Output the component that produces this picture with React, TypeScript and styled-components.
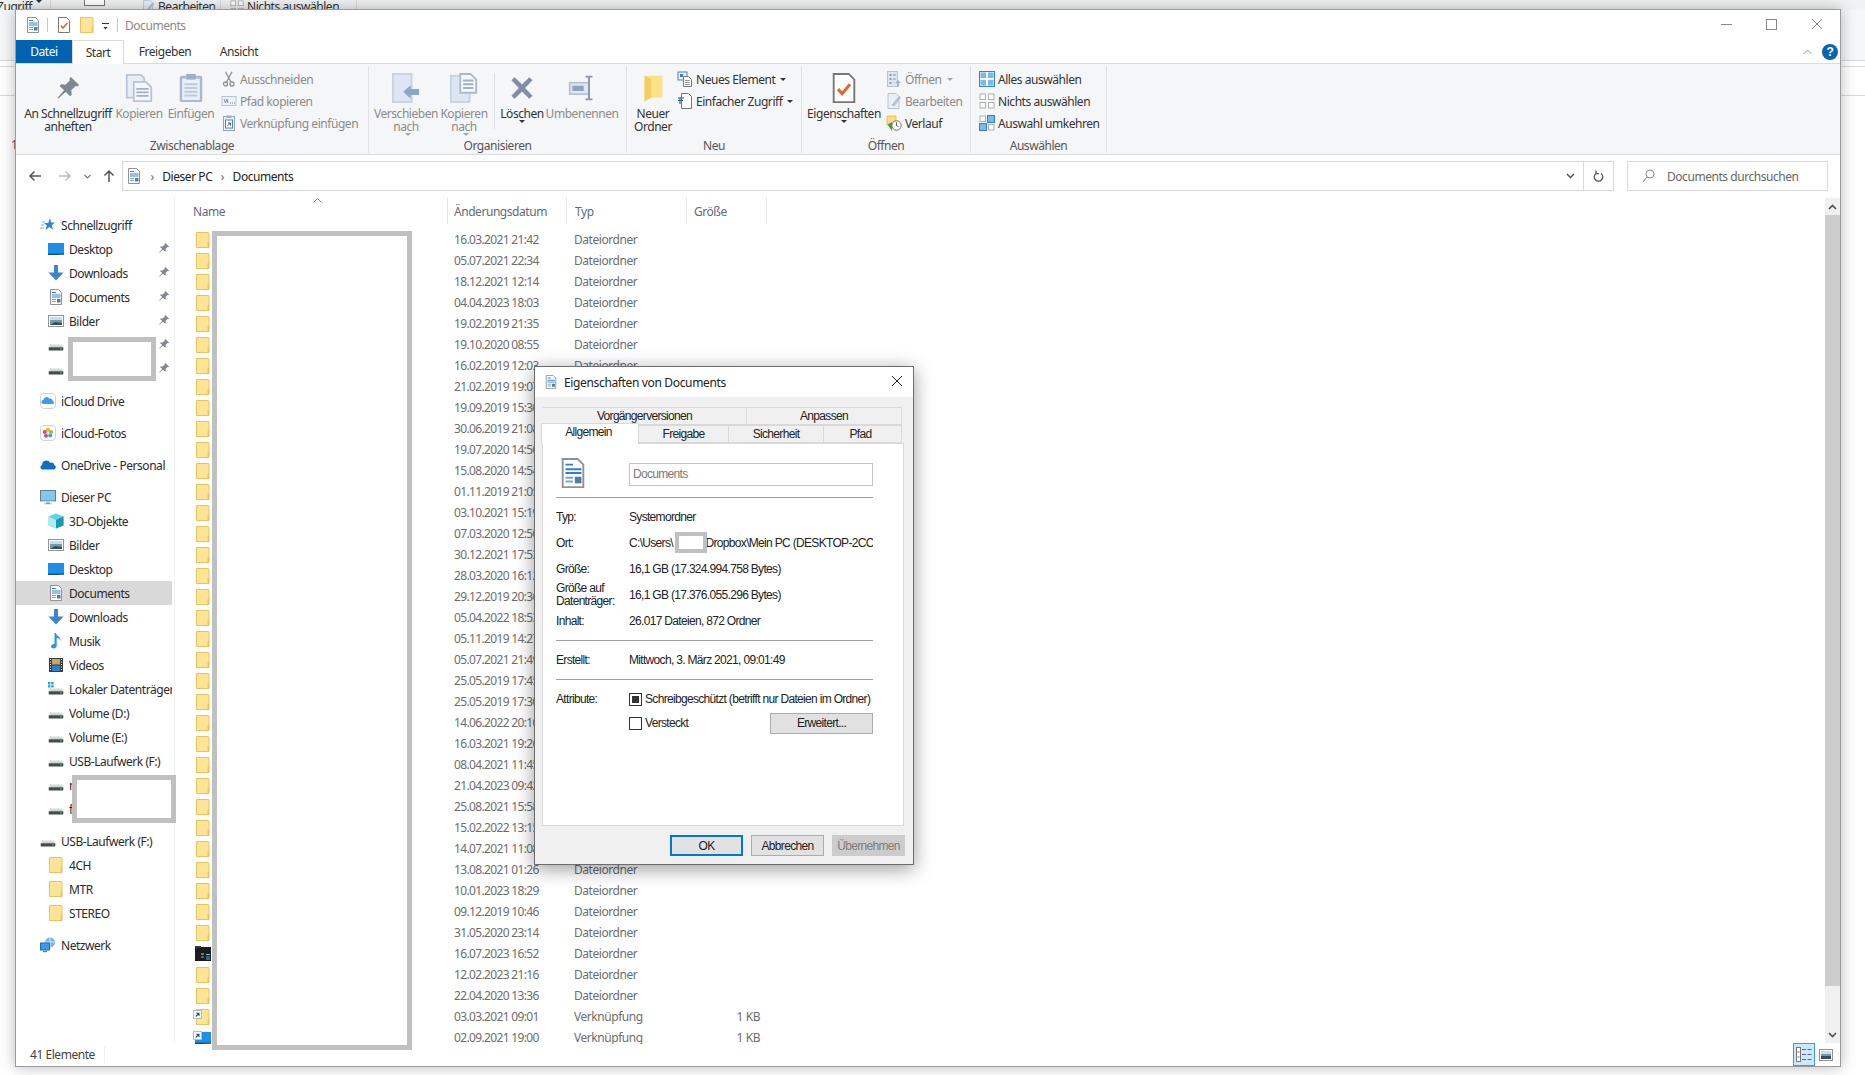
import React from 'react';
import styled, { createGlobalStyle } from 'styled-components';

const GlobalStyle = createGlobalStyle`
  html, body { margin: 0; padding: 0; background: #fff; overflow: hidden; }
  * { box-sizing: border-box; }
`;

const UI_FONT = `"Noto Sans", "Open Sans", sans-serif`;
const DLG_FONT = `"Liberation Sans", Arial, sans-serif`;

/* ---------- icons, all drawn on a 16x16 grid ---------- */
const shapes: Record<string, React.ReactNode> = {
  pin: <path d="M9.8 1.2l5 5-1.1.9-1-.4-2.7 2.7.3 2.7-1 1-2.7-2.7L2 14.4l-.4-.4 4-4.6-2.8-2.7 1-1 2.7.3L9.2 3.3l-.4-1z" fill="#7f8790" />,
  docs: (
    <g>
      <path d="M2.5.5h8l3 3v12h-11z" fill="#fff" stroke="#8d9299" />
      <path d="M4 3.5h4M4 6h8.5M4 8h8.5" stroke="#2f7fd0" />
      <path d="M4 10.5h4M4 12.5h4" stroke="#7aa5cc" />
      <rect x="9" y="10" width="3.5" height="3.5" fill="#4f7f9c" />
    </g>
  ),
  checkDoc: (
    <g>
      <path d="M2.5.5h8l3 3v12h-11z" fill="#fff" stroke="#777" />
      <path d="M4.8 8.6l2.2 2.4 4.2-5" fill="none" stroke="#e2672e" strokeWidth="1.6" />
    </g>
  ),
  folder: (
    <g>
      <path d="M1.5.5h12l.5.5v14.500h-12.500z" fill="#fee495" stroke="#eac25f" />
      <path d="M12.600 10h1.400v5.500h-1.400z" fill="#f0c050" />
    </g>
  ),
  folderLarge: (
    <g>
      <path d="M3.500 1.500h9.500v11.500H6.500L3.500 15z" fill="#fde08a" />
      <path d="M3.500 1.500l3.500 1.500v10L3.500 15z" fill="#f5cd5e" />
    </g>
  ),
  copy: (
    <g stroke="#b5c4d8" fill="#e7eef7">
      <path d="M1 .5h8l2 2v11H1z" />
      <path d="M5 4.5h7l3 3v8H5z" fill="#f4f7fb" />
      <path d="M6.5 8.5h7M6.5 10.5h7M6.5 12.5h7" fill="none" stroke="#9fb0c8" />
    </g>
  ),
  paste: (
    <g>
      <rect x="2" y="1.5" width="12" height="14" fill="#a8bad2" rx="1" />
      <rect x="3.3" y="3" width="9.4" height="11.4" fill="#e8eff8" />
      <rect x="5.5" y="0.5" width="5" height="3" fill="#9cb0ca" />
      <path d="M4.5 6h7M4.5 8h7M4.5 10h7M4.5 12h7" stroke="#bccbdd" />
    </g>
  ),
  scissors: (
    <g fill="none" stroke="#8b929b" strokeWidth="1.3">
      <circle cx="4.5" cy="13" r="2" />
      <circle cx="11" cy="13" r="2" />
      <path d="M5.5 11.3L11 .8M10 11.3L4.5.8" />
    </g>
  ),
  pathCopy: (
    <g>
      <rect x="1" y="3.5" width="14" height="9" fill="#eef2f8" stroke="#b6c3d6" />
      <path d="M3 6l1.5 4L6 6l1 4M9 10h1M11 10h1M13 10h1" stroke="#7c8ea8" fill="none" />
    </g>
  ),
  pasteLink: (
    <g>
      <rect x="2.5" y="1.5" width="11" height="14" fill="#e8eff8" stroke="#8fa6c4" />
      <rect x="5.5" y=".5" width="5" height="2.5" fill="#9cb0ca" />
      <rect x="4.5" y="5" width="7" height="8" fill="#fff" stroke="#5f7ea8" />
      <path d="M6.5 11l3-3M7 8h2.6v2.6" fill="none" stroke="#35598a" />
    </g>
  ),
  moveTo: (
    <g>
      <rect x="1" y=".5" width="10" height="15" fill="#dde6f2" stroke="#c5d3e4" />
      <path d="M6.5 10L10.5 6.5v2H15v3.2h-4.5v2z" fill="#8ba6cb" />
    </g>
  ),
  copyTo: (
    <g>
      <rect x="1" y="1.5" width="10" height="14" fill="#dde6f2" stroke="#c5d3e4" />
      <path d="M6 .5h5.5l3 3v7H6z" fill="#f7f9fc" stroke="#a9bad0" />
      <path d="M7.5 4h5.5M7.5 6h5.5M7.5 8h5.5" stroke="#9fb0c8" />
    </g>
  ),
  del: <path d="M2 3.5L3.8 1.8 8 6l4.2-4.2L14 3.5 9.8 8l4.2 4.4-1.8 1.8L8 10l-4.2 4.2L2 12.4 6.2 8z" fill="#7f8ea6" />,
  rename: (
    <g>
      <rect x="1" y="5" width="11" height="6.5" fill="#dfe7f2" stroke="#b4c2d6" />
      <rect x="2.5" y="6.7" width="6.5" height="3" fill="#8ea2bf" />
      <path d="M10 1.5h4M12 1.5v13M10 14.5h4" stroke="#8c97a8" strokeWidth="1.1" fill="none" />
    </g>
  ),
  newItem: (
    <g>
      <rect x="1" y="1" width="9" height="8" fill="#e8f0f8" stroke="#5d7ea3" />
      <rect x="3" y="3" width="3" height="3" fill="#3d7cb8" />
      <path d="M6.5 5.5h5l3 3v7h-8z" fill="#fff" stroke="#777" />
      <path d="M8 9.5h5M8 11.5h5M8 13.5h5" stroke="#999" />
    </g>
  ),
  easy: (
    <g>
      <path d="M4.5.5h7l3 3v12h-10z" fill="#fff" stroke="#777" />
      <path d="M1 5h6M1 7.5h5M3 5v6" stroke="#2a5f9e" strokeWidth="1.1" fill="none" />
    </g>
  ),
  openDoc: (
    <g>
      <rect x="1.5" y=".5" width="10" height="15" fill="#dfe6f0" stroke="#b4c2d6" />
      <path d="M3.5 3h2v2h-2zM3.5 7h2v2h-2zM3.5 11h2v2h-2z" fill="#8a9ab0" />
      <path d="M7 4h3M7 8h3" stroke="#8a9ab0" />
      <path d="M9 12l3-3 3 3h-2v3.5h-2V12z" fill="#9fb3cf" />
    </g>
  ),
  edit: (
    <g>
      <path d="M2 .5h8l3 3v12H2z" fill="#e9eff7" stroke="#b4c2d6" />
      <path d="M6 12l7-8.5 1.5 1.2L8 13z" fill="#b9c6d8" stroke="#96a6bc" strokeWidth=".5" />
    </g>
  ),
  history: (
    <g>
      <path d="M1 1h9v9H1z" fill="#fbdc80" stroke="#e6bb4f" strokeWidth=".8" />
      <path d="M1.5 9.5L6 7v3h2.5v3H6v3z" fill="#3aa639" />
      <circle cx="10.5" cy="10.5" r="4.7" fill="#fff" stroke="#6c6c6c" />
      <path d="M10.5 7.3v3.3l2 1" stroke="#555" fill="none" />
    </g>
  ),
  selectAll: (
    <g fill="#7cb8ec" stroke="#2e84cc">
      <rect x=".5" y=".5" width="15" height="15" fill="none" strokeWidth="1" />
      <rect x="1.5" y="1.5" width="5.5" height="5.5" strokeWidth="0" />
      <rect x="9" y="1.5" width="5.5" height="5.5" strokeWidth="0" />
      <rect x="1.5" y="9" width="5.5" height="5.5" strokeWidth="0" />
      <rect x="9" y="9" width="5.5" height="5.5" strokeWidth="0" />
    </g>
  ),
  selectNone: (
    <g fill="#fff" stroke="#aeaeae">
      <rect x="1" y="1" width="5.5" height="5.5" />
      <rect x="9.5" y="1" width="5.5" height="5.5" />
      <rect x="1" y="9.5" width="5.5" height="5.5" />
      <rect x="9.5" y="9.5" width="5.5" height="5.5" />
    </g>
  ),
  invert: (
    <g>
      <rect x="1" y="1" width="5.5" height="5.5" fill="#fff" stroke="#aeaeae" />
      <rect x="8.5" y=".5" width="7" height="7" fill="#7cb8ec" stroke="#2e84cc" />
      <rect x=".5" y="8.5" width="7" height="7" fill="#7cb8ec" stroke="#2e84cc" />
      <rect x="9.5" y="9.5" width="5.5" height="5.5" fill="#fff" stroke="#aeaeae" />
    </g>
  ),
  star: (
    <g>
      <path d="M10 1l1.2 4.4H15l-3.2 2.8 1.2 4.6L9.5 10l-4 3 1.3-4.6L4 6h4.2z" fill="#2f86d8" />
      <path d="M1 8h3M0 11h3.5M2 5h3" stroke="#6fb2ea" />
    </g>
  ),
  desktop: (
    <g>
      <rect x="0" y="2" width="16" height="12" fill="#1e8fe8" />
      <rect x="0" y="12.6" width="16" height="1.4" fill="#14507e" />
      <rect x="11" y="12.6" width="5" height="1.4" fill="#2a6f9f" />
    </g>
  ),
  down: <path d="M6 0h4v7.5h5.5L8 15.5.5 7.5H6z" fill="#3b84d2" />,
  picture: (
    <g>
      <rect x=".5" y="2.5" width="15" height="11" fill="#fff" stroke="#8f959b" />
      <rect x="2" y="4" width="12" height="3" fill="#bfe0f4" />
      <rect x="2" y="7" width="12" height="5" fill="#7b98a4" />
      <path d="M2 12l5-3 7 1v2z" fill="#33505e" />
    </g>
  ),
  drive: (
    <g>
      <path d="M2 7.5h12l1.3 3H.7z" fill="#d4d6d8" />
      <rect x=".7" y="10.3" width="14.6" height="3.2" rx=".4" fill="#454a4d" />
      <rect x="12" y="11.3" width="1.5" height="1.2" fill="#4ed05a" />
    </g>
  ),
  local: (
    <g>
      <path d="M2 7.5h12l1.3 3H.7z" fill="#d4d6d8" />
      <rect x=".7" y="10.3" width="14.6" height="3.2" rx=".4" fill="#454a4d" />
      <rect x="12" y="11.3" width="1.5" height="1.2" fill="#4ed05a" />
      <path d="M0 1h2.4v2.4H0zM3.2 1h2.4v2.4H3.2zM0 4.2h2.4v2.4H0zM3.2 4.2h2.4v2.4H3.2z" fill="#1ea1e6" />
    </g>
  ),
  iCloud: (
    <g>
      <rect x=".5" y=".5" width="15" height="15" rx="3.5" fill="#fff" stroke="#d3d3d3" />
      <path d="M3.2 11a2 2 0 01.1-4 3.2 3.2 0 016-1.2A2.6 2.6 0 0112.8 8 1.6 1.6 0 0113 11z" fill="#3b9cec" />
    </g>
  ),
  photos: (
    <g>
      <rect x=".5" y=".5" width="15" height="15" rx="3.5" fill="#fff" stroke="#d3d3d3" />
      <circle cx="8" cy="4.8" r="2" fill="#f4b400" />
      <circle cx="11" cy="7" r="2" fill="#7cc04b" />
      <circle cx="10.2" cy="10.6" r="2" fill="#38a3d9" />
      <circle cx="6" cy="10.8" r="2" fill="#8f5fc6" />
      <circle cx="4.8" cy="7" r="2" fill="#e5483d" />
      <circle cx="8" cy="8" r="1.3" fill="#fbe7c8" />
    </g>
  ),
  oneDrive: <path d="M2.6 12.5a2.3 2.3 0 01-.5-4.5 4.3 4.3 0 018-2.3 3 3 0 014.2 2.2 2.4 2.4 0 01-.4 4.6z" fill="#0f70c5" />,
  pc: (
    <g>
      <rect x=".5" y="1.5" width="15" height="10.5" fill="#7ccaf0" stroke="#6d7a84" />
      <path d="M1 12h14v1.2H1z" fill="#cfd6da" />
      <path d="M6 13.2h4v1.3h2v.8H4v-.8h2z" fill="#9aa4ab" />
    </g>
  ),
  cube: (
    <g>
      <path d="M8 .5l7.5 3v9L8 15.5.5 12.5v-9z" fill="#5fd3e0" />
      <path d="M8 7l7.5-3.5v9L8 15.5z" fill="#1697b8" />
      <path d="M.5 3.5L8 7v8.5l-7.5-3z" fill="#aeecef" />
    </g>
  ),
  music: <path d="M6.5 0h1.4c.4 3 5 3.5 4.6 8-.6-2-2.2-3-3.8-3.3v8c0 1.5-1.6 2.8-3.2 2.8S3 14.600 3 13.300s1.500-2.600 3.500-2.300z" fill="#2796e0" />,
  video: (
    <g>
      <rect x="1" y="1" width="14" height="14" fill="#3a3f44" />
      <rect x="4" y="2" width="8" height="5.500" fill="#c8a85a" />
      <rect x="4" y="8.500" width="8" height="5.500" fill="#2d7fcf" />
      <path d="M2 2.500h1M2 5h1M2 7.500h1M2 10h1M2 12.500h1M13 2.500h1M13 5h1M13 7.500h1M13 10h1M13 12.500h1" stroke="#e8e8e8" />
    </g>
  ),
  network: (
    <g>
      <circle cx="10" cy="5.500" r="5" fill="#77b5e8" />
      <path d="M6 5h8M10 .8v9.500" stroke="#d6ebfa" />
      <rect x=".5" y="6" width="9" height="7" fill="#3d9ae8" stroke="#1d6fb8" />
      <path d="M3 14.500h4" stroke="#5d7f9c" strokeWidth="1.400" />
    </g>
  ),
  darkFolder: (
    <g>
      <rect x="0" y="1" width="16" height="14" fill="#1c1c1e" />
      <rect x="0" y="0" width="6" height="2" fill="#3a3a3c" />
      <path d="M6 8h3" stroke="#e8c94e" />
      <path d="M6 11h3M11 8.500h4" stroke="#4fd0c0" />
      <path d="M11 11h4M11 13h4" stroke="#5ba3e6" />
    </g>
  ),
  badge: (
    <g>
      <rect x=".5" y=".5" width="8" height="8" fill="#fff" stroke="#b7bcc2" />
      <path d="M2.700 6.500l3-3M3.200 3.200h2.800V6" fill="none" stroke="#26568e" strokeWidth="1.100" />
    </g>
  ),
};

const Svg = styled.svg`
  display: block;
  flex: none;
`;

const Icon: React.FC<{ n: string; s?: number }> = ({ n, s = 16 }) => (
  <Svg width={s} height={s} viewBox="0 0 16 16">
    {shapes[n]}
  </Svg>
);

/* ---------- desktop and the window behind ---------- */
const Desktop = styled.div`
  position: relative;
  width: 1865px;
  height: 1075px;
  overflow: hidden;
  background: #fff;
  font-family: ${UI_FONT};
  font-size: 12px;
  letter-spacing: -0.45px;
`;

const BackWindow = styled.div`
  position: absolute;
  inset: 0;
  color: #333;
`;

const BackStrip = styled.div`
  height: 10px;
  background: #f1f2f3;
  display: flex;
  align-items: flex-start;
  overflow: hidden;
  line-height: 14px;
`;

const BackItem = styled.span<{ $w: number; $sep?: boolean; $pl?: number; $ml?: number }>`
  width: ${p => p.$w}px;
  height: 10px;
  flex: none;
  display: flex;
  gap: 3px;
  white-space: nowrap;
  padding-left: ${p => p.$pl ?? 0}px;
  margin-left: ${p => p.$ml ?? 0}px;
  border-right: ${p => (p.$sep ? '1px solid #d8d8d8' : 'none')};
`;

const BackDoc = styled.span`
  width: 21px;
  height: 6px;
  margin-left: 33px;
  background: #fff;
  border: 1px solid #777;
  border-top: none;
`;

const BackBand = styled.div<{ $h: number; $bg?: string }>`
  height: ${p => p.$h}px;
  background: ${p => p.$bg || '#fff'};
  border-bottom: 1px solid #d9d9d9;
`;

const BackDigit = styled.div`
  padding: 40px 0 0 11px;
  color: #555;
`;

/* ---------- explorer window ---------- */
const ExplorerWindow = styled.div`
  position: absolute;
  left: 15px;
  top: 9px;
  width: 1826px;
  height: 1058px;
  background: #fff;
  border: 1px solid #9b9b9b;
  box-shadow: 0 0 14px rgba(0, 0, 0, 0.28);
  display: flex;
  flex-direction: column;
`;

const TitleBar = styled.div`
  height: 30px;
  flex: none;
  display: flex;
  align-items: center;
  padding-left: 9px;
  color: #8a8a8a;
`;

const QatSep = styled.span<{ $l: number; $r: number }>`
  width: 1px;
  height: 14px;
  background: #c6c6c6;
  margin: 0 ${p => p.$r}px 0 ${p => p.$l}px;
`;

const QatGap = styled.span`
  width: 7px;
`;

const QatMenu = styled.span`
  width: 7px;
  height: 7px;
  margin: 2px 0 0 7px;
  border-top: 1px solid #333;
  background: linear-gradient(#333, #333) center 3px / 7px 3px no-repeat;
  clip-path: polygon(0 0, 100% 0, 100% 40%, 50% 100%, 0 40%);
`;

const WindowControls = styled.div`
  margin: 0 0 2px auto;
  display: flex;
  align-items: center;
  padding-right: 17px;
  gap: 34px;
`;

const TabBar = styled.div`
  height: 23px;
  flex: none;
  display: flex;
  align-items: stretch;
  position: relative;
  z-index: 1;
`;

const FileTab = styled.div`
  width: 56px;
  background: #0063b1;
  color: #fff;
  display: flex;
  align-items: center;
  justify-content: center;
`;

const RibbonTab = styled.div<{ $active?: boolean; $w: number }>`
  width: ${p => p.$w}px;
  display: flex;
  align-items: center;
  justify-content: center;
  color: #333;
  height: ${p => (p.$active ? 24 : 23)}px;
  border: ${p => (p.$active ? '1px solid #dadbdc' : 'none')};
  border-bottom: none;
  background: #fff;
`;

const HelpArea = styled.div`
  margin-left: auto;
  display: flex;
  align-items: center;
  gap: 10px;
  padding-right: 2px;
`;

const HelpBadge = styled.span`
  width: 16px;
  height: 16px;
  border-radius: 50%;
  background: #0b63b5;
  color: #fff;
  font: bold 12px/16px ${DLG_FONT};
  text-align: center;
`;

const Ribbon = styled.div`
  height: 92px;
  flex: none;
  display: flex;
  background: #f5f6f7;
  border-top: 1px solid #dadbdc;
  border-bottom: 1px solid #dadbdc;
  padding-top: 2px;
`;

const RibbonGroup = styled.div<{ $w: number; $pad?: number }>`
  width: ${p => p.$w}px;
  height: 87px;
  flex: none;
  display: flex;
  flex-direction: column;
  padding-left: ${p => p.$pad ?? 0}px;
  border-right: 1px solid #e2e3e4;
`;

const GroupBody = styled.div`
  flex: 1;
  display: flex;
  padding-top: 2px;
`;

const GroupLabel = styled.div<{ $offset?: number }>`
  height: 14px;
  line-height: 14px;
  text-align: center;
  color: #555;
  margin-left: ${p => p.$offset ?? 0}px;
`;

const LargeButton = styled.div<{ $w: number; $off?: boolean }>`
  width: ${p => p.$w}px;
  flex: none;
  display: flex;
  flex-direction: column;
  align-items: center;
  line-height: 13px;
  text-align: center;
  color: ${p => (p.$off ? '#8b8b8b' : '#333')};
  white-space: nowrap;
`;

const LargeIconBox = styled.div`
  height: 39px;
  display: flex;
  align-items: center;
  justify-content: center;
`;

const SmallColumn = styled.div<{ $ml?: number }>`
  display: flex;
  flex-direction: column;
  margin-left: ${p => p.$ml ?? 0}px;
`;

const SmallItem = styled.div<{ $off?: boolean }>`
  height: 22px;
  display: flex;
  align-items: center;
  gap: 3px;
  white-space: nowrap;
  color: ${p => (p.$off ? '#8b8b8b' : '#333')};
`;

const Caret = styled.span<{ $off?: boolean; $ml?: number }>`
  display: inline-block;
  width: 0;
  height: 0;
  margin-left: ${p => p.$ml ?? 4}px;
  vertical-align: middle;
  border-left: 3px solid transparent;
  border-right: 3px solid transparent;
  border-top: 3px solid ${p => (p.$off ? '#a5a5a5' : '#333')};
`;

const RibbonDivider = styled.span`
  width: 1px;
  height: 56px;
  margin: 5px 0 0 6px;
  background: #dfe0e1;
  flex: none;
`;

/* ---------- navigation row ---------- */
const NavBar = styled.div`
  height: 41px;
  flex: none;
  display: flex;
  padding: 6px 12px 5px 0;
`;

const NavButton = styled.div<{ $w: number }>`
  width: ${p => p.$w}px;
  display: flex;
  align-items: center;
  justify-content: center;
  flex: none;
`;

const AddressBox = styled.div`
  flex: 1;
  margin-left: 4px;
  border: 1px solid #d9d9d9;
  display: flex;
  align-items: center;
  padding-left: 3px;
  color: #222;
`;

const Crumb = styled.span`
  margin: 0 8.500px;
  color: #666;
  font-size: 12px;
`;

const AddressEnd = styled.div`
  margin-left: auto;
  display: flex;
  align-items: center;
  height: 100%;
`;

const RefreshCell = styled.div`
  width: 30px;
  height: 100%;
  margin-left: 8px;
  border-left: 1px solid #d9d9d9;
  display: flex;
  align-items: center;
  justify-content: center;
`;

const SearchBox = styled.div`
  width: 201px;
  margin-left: 13px;
  border: 1px solid #d9d9d9;
  display: flex;
  align-items: center;
  gap: 12px;
  padding-left: 14px;
  color: #666;
`;

/* ---------- body ---------- */
const Body = styled.div`
  flex: 1;
  min-height: 0;
  display: flex;
`;

const Sidebar = styled.div`
  width: 159px;
  flex: none;
  padding-top: 17px;
  border-right: 1px solid #f0f0f0;
  overflow: hidden;
`;

const NavRow = styled.div<{ $lvl: number; $gap?: boolean; $sel?: boolean }>`
  position: relative;
  height: 24px;
  width: 156px;
  margin-top: ${p => (p.$gap ? 8 : 0)}px;
  padding-left: ${p => (p.$lvl ? 32 : 24)}px;
  display: flex;
  align-items: center;
  gap: 5px;
  color: #2b2b2b;
  white-space: nowrap;
  overflow: hidden;
  background: ${p => (p.$sel ? '#d9d9d9' : 'transparent')};
`;

const RowPin = styled.span`
  position: absolute;
  left: 142px;
  top: 5px;
`;

const Main = styled.div`
  flex: 1;
  min-width: 0;
  padding-top: 2px;
`;

const ListGrid = `
  display: grid;
  grid-template-columns: 273px 119px 120px 80px;
`;

const ListHeader = styled.div`
  ${ListGrid}
  height: 26px;
  color: #5f6b78;
`;

const HeadCell = styled.div<{ $pad: number }>`
  position: relative;
  padding-left: ${p => p.$pad}px;
  border-right: 1px solid #e5e5e5;
  display: flex;
  align-items: center;
  white-space: nowrap;
`;

const SortCaret = styled.svg`
  position: absolute;
  left: 138px;
  top: 0;
`;

const Rows = styled.div`
  height: 815px;
  margin-top: 5px;
  overflow: hidden;
`;

const FileRow = styled.div`
  ${ListGrid}
  height: 21px;
  align-items: center;
  color: #6d6d6d;
`;

const NameCell = styled.div`
  position: relative;
  padding-left: 20px;
`;

const ShortcutBadge = styled.span`
  position: absolute;
  left: 18px;
  bottom: -1px;
`;

const DateCell = styled.div`
  padding-left: 6px;
  white-space: nowrap;
  letter-spacing: -0.65px;
`;

const TypeCell = styled.div`
  padding-left: 7px;
  white-space: nowrap;
`;

const SizeCell = styled.div`
  padding-right: 7px;
  text-align: right;
  white-space: nowrap;
`;

const ScrollTrack = styled.div`
  width: 15px;
  margin-top: 2px;
  flex: none;
  background: #f0f0f0;
  display: flex;
  flex-direction: column;
`;

const ScrollArrow = styled.div`
  height: 17px;
  flex: none;
  display: flex;
  align-items: center;
  justify-content: center;
`;

const ScrollThumb = styled.div`
  height: 771px;
  flex: none;
  background: #cdcdcd;
`;

const ScrollRest = styled.div`
  flex: 1;
`;

const StatusBar = styled.div`
  height: 23px;
  flex: none;
  display: flex;
  align-items: center;
  padding: 0 7px 0 14px;
  color: #444;
`;

const StatusCount = styled.div`
  width: 75px;
  border-right: 1px solid #f0f0f0;
`;

const ViewToggle = styled.div`
  margin-left: auto;
  display: flex;
  align-items: center;
  gap: 4px;
  height: 100%;
`;

const ViewActive = styled.div`
  width: 22px;
  height: 23px;
  background: #cce8ff;
  border: 1px solid #3f9fc6;
  display: flex;
  align-items: center;
  justify-content: center;
`;

/* ---------- properties dialog ---------- */
const Dialog = styled.div`
  position: absolute;
  left: 534px;
  top: 366px;
  width: 380px;
  height: 499px;
  background: #f0f0f0;
  border: 1px solid #6d6d6d;
  box-shadow: 0 4px 18px rgba(0, 0, 0, 0.4);
  font-family: ${DLG_FONT};
  font-size: 12px;
  letter-spacing: -0.68px;
  color: #222;
  display: flex;
  flex-direction: column;
  z-index: 3;
`;

const DialogTitle = styled.div`
  height: 30px;
  flex: none;
  background: #fff;
  display: flex;
  align-items: center;
  padding: 0 10px 0 9px;
  gap: 6px;
  font-family: ${UI_FONT};
  letter-spacing: -0.35px;
`;

const DialogClose = styled.span`
  margin-left: auto;
`;

const TabRow = styled.div<{ $first?: boolean }>`
  display: flex;
  height: 18px;
  margin-top: ${p => (p.$first ? 10 : 0)}px;
  margin-left: ${p => (p.$first ? 8 : 6)}px;
`;

const DialogTab = styled.div<{ $w: number; $active?: boolean; $pr?: number }>`
  width: ${p => p.$w}px;
  height: ${p => (p.$active ? 21 : 18)}px;
  margin-top: ${p => (p.$active ? -2 : 0)}px;
  padding-right: ${p => p.$pr ?? (p.$active ? 3 : 0)}px;
  padding-bottom: ${p => (p.$active ? 4 : 0)}px;
  display: flex;
  align-items: center;
  justify-content: center;
  background: ${p => (p.$active ? '#fff' : '#f0f0f0')};
  border: 1px solid #d9d9d9;
  border-left: ${p => (p.$active ? '1px solid #d9d9d9' : 'none')};
  border-bottom: ${p => (p.$active ? 'none' : '1px solid #d9d9d9')};
  position: relative;
  z-index: ${p => (p.$active ? 2 : 0)};
`;

const Panel = styled.div`
  width: 362px;
  height: 383px;
  margin-left: 7px;
  background: #fff;
  border: 1px solid #d9d9d9;
  padding: 14px 30px 0 13px;
`;

const IconRow = styled.div`
  height: 39px;
  display: flex;
  padding-left: 2px;
`;

const NameInput = styled.div`
  width: 246px;
  height: 23px;
  margin: 5px 0 0 41px;
  border: 1px solid #c4c4c4;
  padding-left: 3px;
  color: #7a7a7a;
  line-height: 20px;
`;

const PropSep = styled.div<{ $mt?: number }>`
  height: 1px;
  background: #a0a0a0;
  margin-top: ${p => p.$mt ?? 0}px;
`;

const PropRow = styled.div<{ $mt?: number; $h?: number }>`
  display: grid;
  grid-template-columns: 73px 1fr;
  align-items: center;
  height: ${p => p.$h ?? 26}px;
  margin-top: ${p => p.$mt ?? 0}px;
  white-space: nowrap;
`;

const TwoLine = styled.div`
  line-height: 13px;
`;

const PathValue = styled.div`
  overflow: hidden;
`;

const PathGap = styled.span`
  display: inline-block;
  width: 30px;
`;

const CheckRow = styled.div`
  display: flex;
  align-items: center;
  gap: 3px;
`;

const CheckBox = styled.span<{ $mixed?: boolean }>`
  width: 13px;
  height: 13px;
  border: 1px solid #333;
  background: ${p => (p.$mixed ? 'linear-gradient(#333, #333) center / 7px 7px no-repeat #fff' : '#fff')};
`;

const DialogButton = styled.div<{ $w?: number; $default?: boolean; $off?: boolean }>`
  width: ${p => p.$w ?? 73}px;
  height: 21px;
  display: flex;
  align-items: center;
  justify-content: center;
  background: ${p => (p.$off ? '#cccccc' : '#e1e1e1')};
  border: ${p => (p.$default ? '2px solid #0078d7' : p.$off ? '1px solid #cccccc' : '1px solid #adadad')};
  color: ${p => (p.$off ? '#7d7d7d' : '#222')};
`;

const AdvancedButton = styled(DialogButton)`
  margin-left: auto;
`;

const DialogFooter = styled.div`
  display: flex;
  justify-content: flex-end;
  gap: 8px;
  margin-top: 9px;
  padding-right: 8px;
`;

/* gray frames that hide names in the reference */
const Redaction = styled.div<{ $x: number; $y: number; $w: number; $h: number; $b?: number; $z?: number }>`
  position: absolute;
  left: ${p => p.$x}px;
  top: ${p => p.$y}px;
  width: ${p => p.$w}px;
  height: ${p => p.$h}px;
  background: #fff;
  border: ${p => p.$b ?? 5}px solid #c0c0c0;
  z-index: ${p => p.$z ?? 2};
`;

/* ---------- data ---------- */
const files: [string, string, string, string, string?][] = [
  ['16.03.2021 21:42', 'Dateiordner', '', 'folder'],
  ['05.07.2021 22:34', 'Dateiordner', '', 'folder'],
  ['18.12.2021 12:14', 'Dateiordner', '', 'folder'],
  ['04.04.2023 18:03', 'Dateiordner', '', 'folder'],
  ['19.02.2019 21:35', 'Dateiordner', '', 'folder'],
  ['19.10.2020 08:55', 'Dateiordner', '', 'folder'],
  ['16.02.2019 12:03', 'Dateiordner', '', 'folder'],
  ['21.02.2019 19:07', 'Dateiordner', '', 'folder'],
  ['19.09.2019 15:30', 'Dateiordner', '', 'folder'],
  ['30.06.2019 21:08', 'Dateiordner', '', 'folder'],
  ['19.07.2020 14:50', 'Dateiordner', '', 'folder'],
  ['15.08.2020 14:54', 'Dateiordner', '', 'folder'],
  ['01.11.2019 21:05', 'Dateiordner', '', 'folder'],
  ['03.10.2021 15:19', 'Dateiordner', '', 'folder'],
  ['07.03.2020 12:50', 'Dateiordner', '', 'folder'],
  ['30.12.2021 17:53', 'Dateiordner', '', 'folder'],
  ['28.03.2020 16:12', 'Dateiordner', '', 'folder'],
  ['29.12.2019 20:36', 'Dateiordner', '', 'folder'],
  ['05.04.2022 18:53', 'Dateiordner', '', 'folder'],
  ['05.11.2019 14:27', 'Dateiordner', '', 'folder'],
  ['05.07.2021 21:49', 'Dateiordner', '', 'folder'],
  ['25.05.2019 17:45', 'Dateiordner', '', 'folder'],
  ['25.05.2019 17:30', 'Dateiordner', '', 'folder'],
  ['14.06.2022 20:10', 'Dateiordner', '', 'folder'],
  ['16.03.2021 19:26', 'Dateiordner', '', 'folder'],
  ['08.04.2021 11:45', 'Dateiordner', '', 'folder'],
  ['21.04.2023 09:42', 'Dateiordner', '', 'folder'],
  ['25.08.2021 15:58', 'Dateiordner', '', 'folder'],
  ['15.02.2022 13:15', 'Dateiordner', '', 'folder'],
  ['14.07.2021 11:08', 'Dateiordner', '', 'folder'],
  ['13.08.2021 01:26', 'Dateiordner', '', 'folder'],
  ['10.01.2023 18:29', 'Dateiordner', '', 'folder'],
  ['09.12.2019 10:46', 'Dateiordner', '', 'folder'],
  ['31.05.2020 23:14', 'Dateiordner', '', 'folder'],
  ['16.07.2023 16:52', 'Dateiordner', '', 'darkFolder'],
  ['12.02.2023 21:16', 'Dateiordner', '', 'folder'],
  ['22.04.2020 13:36', 'Dateiordner', '', 'folder'],
  ['03.03.2021 09:01', 'Verknüpfung', '1 KB', 'folder', 'link'],
  ['02.09.2021 19:00', 'Verknüpfung', '1 KB', 'desktop', 'link'],
];

const navItems: { label: string; icon: string; lvl: number; gap?: boolean; pin?: boolean; sel?: boolean }[] = [
  { label: 'Schnellzugriff', icon: 'star', lvl: 0 },
  { label: 'Desktop', icon: 'desktop', lvl: 1, pin: true },
  { label: 'Downloads', icon: 'down', lvl: 1, pin: true },
  { label: 'Documents', icon: 'docs', lvl: 1, pin: true },
  { label: 'Bilder', icon: 'picture', lvl: 1, pin: true },
  { label: '', icon: 'drive', lvl: 1, pin: true },
  { label: '', icon: 'drive', lvl: 1, pin: true },
  { label: 'iCloud Drive', icon: 'iCloud', lvl: 0, gap: true },
  { label: 'iCloud-Fotos', icon: 'photos', lvl: 0, gap: true },
  { label: 'OneDrive - Personal', icon: 'oneDrive', lvl: 0, gap: true },
  { label: 'Dieser PC', icon: 'pc', lvl: 0, gap: true },
  { label: '3D-Objekte', icon: 'cube', lvl: 1 },
  { label: 'Bilder', icon: 'picture', lvl: 1 },
  { label: 'Desktop', icon: 'desktop', lvl: 1 },
  { label: 'Documents', icon: 'docs', lvl: 1, sel: true },
  { label: 'Downloads', icon: 'down', lvl: 1 },
  { label: 'Musik', icon: 'music', lvl: 1 },
  { label: 'Videos', icon: 'video', lvl: 1 },
  { label: 'Lokaler Datenträger', icon: 'local', lvl: 1 },
  { label: 'Volume (D:)', icon: 'drive', lvl: 1 },
  { label: 'Volume (E:)', icon: 'drive', lvl: 1 },
  { label: 'USB-Laufwerk (F:)', icon: 'drive', lvl: 1 },
  { label: 'n', icon: 'drive', lvl: 1 },
  { label: 'f', icon: 'drive', lvl: 1 },
  { label: 'USB-Laufwerk (F:)', icon: 'drive', lvl: 0, gap: true },
  { label: '4CH', icon: 'folder', lvl: 1 },
  { label: 'MTR', icon: 'folder', lvl: 1 },
  { label: 'STEREO', icon: 'folder', lvl: 1 },
  { label: 'Netzwerk', icon: 'network', lvl: 0, gap: true },
];

const Big: React.FC<{ icon: string; size?: number; w: number; off?: boolean; children: React.ReactNode }> = ({
  icon,
  size = 28,
  w,
  off,
  children,
}) => (
  <LargeButton $w={w} $off={off}>
    <LargeIconBox>
      <Icon n={icon} s={size} />
    </LargeIconBox>
    {children}
  </LargeButton>
);

const Line = ({ x1, y1, x2, y2, c = '#555', w = 1 }: { x1: number; y1: number; x2: number; y2: number; c?: string; w?: number }) => (
  <line x1={x1} y1={y1} x2={x2} y2={y2} stroke={c} strokeWidth={w} />
);

const App: React.FC = () => {
  return (
    <Desktop>
      <GlobalStyle />

      <BackWindow>
        <BackStrip>
          <BackItem $w={54} $sep $ml={-3}>
            <span>Zugriff</span>
            <Caret $ml={1} />
          </BackItem>
          <BackDoc />
          <BackItem $w={116} $pl={37} $sep>
            <Icon n="edit" s={13} />
            Bearbeiten
          </BackItem>
          <BackItem $w={136} $pl={9} $sep>
            <Icon n="selectNone" s={14} />
            Nichts auswählen
          </BackItem>
        </BackStrip>
        <BackBand $h={51} $bg="#f6f7f8" />
        <BackBand $h={6} />
        <BackBand $h={29} />
        <BackDigit>1</BackDigit>
      </BackWindow>

      <ExplorerWindow>
        <TitleBar>
          <Icon n="docs" s={16} />
          <QatSep $l={6} $r={8} />
          <Icon n="checkDoc" s={16} />
          <QatGap />
          <Icon n="folder" s={16} />
          <QatMenu />
          <QatSep $l={8} $r={7} />
          Documents
          <WindowControls>
            <svg width="11" height="11" viewBox="0 0 11 11">
              <Line x1={0} y1={5.5} x2={11} y2={5.5} c="#888" />
            </svg>
            <svg width="11" height="11" viewBox="0 0 11 11">
              <rect x=".5" y=".5" width="10" height="10" fill="none" stroke="#888" />
            </svg>
            <svg width="12" height="12" viewBox="0 0 12 12">
              <Line x1={1} y1={1} x2={11} y2={11} c="#888" />
              <Line x1={11} y1={1} x2={1} y2={11} c="#888" />
            </svg>
          </WindowControls>
        </TitleBar>

        <TabBar>
          <FileTab>Datei</FileTab>
          <RibbonTab $active $w={52}>
            Start
          </RibbonTab>
          <RibbonTab $w={82}>Freigeben</RibbonTab>
          <RibbonTab $w={66}>Ansicht</RibbonTab>
          <HelpArea>
            <svg width="9" height="6" viewBox="0 0 9 6">
              <path d="M.5 5L4.500 1 8.500 5" fill="none" stroke="#999" />
            </svg>
            <HelpBadge>?</HelpBadge>
          </HelpArea>
        </TabBar>

        <Ribbon>
          <RibbonGroup $w={353} $pad={8}>
            <GroupBody>
              <Big icon="pin" size={26} w={88}>
                An Schnellzugriff
                <br />
                anheften
              </Big>
              <Big icon="copy" w={54} off>
                Kopieren
              </Big>
              <Big icon="paste" size={30} w={50} off>
                Einfügen
              </Big>
              <SmallColumn $ml={5}>
                <SmallItem $off>
                  <Icon n="scissors" />
                  Ausschneiden
                </SmallItem>
                <SmallItem $off>
                  <Icon n="pathCopy" />
                  Pfad kopieren
                </SmallItem>
                <SmallItem $off>
                  <Icon n="pasteLink" />
                  Verknüpfung einfügen
                </SmallItem>
              </SmallColumn>
            </GroupBody>
            <GroupLabel $offset={-8}>Zwischenablage</GroupLabel>
          </RibbonGroup>

          <RibbonGroup $w={258} $pad={3}>
            <GroupBody>
              <Big icon="moveTo" size={30} w={68} off>
                Verschieben
                <br />
                nach
                <Caret $off />
              </Big>
              <Big icon="copyTo" size={30} w={48} off>
                Kopieren
                <br />
                nach
                <Caret $off />
              </Big>
              <RibbonDivider />
              <Big icon="del" w={54}>
                Löschen
                <br />
                <Caret $ml={0} />
              </Big>
              <Big icon="rename" w={66} off>
                Umbenennen
              </Big>
            </GroupBody>
            <GroupLabel $offset={-3}>Organisieren</GroupLabel>
          </RibbonGroup>

          <RibbonGroup $w={175} $pad={3}>
            <GroupBody>
              <Big icon="folderLarge" size={30} w={46}>
                Neuer
                <br />
                Ordner
              </Big>
              <SmallColumn $ml={1}>
                <SmallItem>
                  <Icon n="newItem" />
                  Neues Element
                  <Caret $ml={2} />
                </SmallItem>
                <SmallItem>
                  <Icon n="easy" />
                  Einfacher Zugriff
                  <Caret $ml={2} />
                </SmallItem>
              </SmallColumn>
            </GroupBody>
            <GroupLabel $offset={-3}>Neu</GroupLabel>
          </RibbonGroup>

          <RibbonGroup $w={169} $pad={3}>
            <GroupBody>
              <Big icon="checkDoc" size={30} w={78}>
                Eigenschaften
                <br />
                <Caret $ml={0} />
              </Big>
              <SmallColumn $ml={3}>
                <SmallItem $off>
                  <Icon n="openDoc" />
                  Öffnen
                  <Caret $off $ml={2} />
                </SmallItem>
                <SmallItem $off>
                  <Icon n="edit" />
                  Bearbeiten
                </SmallItem>
                <SmallItem>
                  <Icon n="history" />
                  Verlauf
                </SmallItem>
              </SmallColumn>
            </GroupBody>
            <GroupLabel $offset={-3}>Öffnen</GroupLabel>
          </RibbonGroup>

          <RibbonGroup $w={136} $pad={8}>
            <GroupBody>
              <SmallColumn>
                <SmallItem>
                  <Icon n="selectAll" />
                  Alles auswählen
                </SmallItem>
                <SmallItem>
                  <Icon n="selectNone" />
                  Nichts auswählen
                </SmallItem>
                <SmallItem>
                  <Icon n="invert" />
                  Auswahl umkehren
                </SmallItem>
              </SmallColumn>
            </GroupBody>
            <GroupLabel $offset={-8}>Auswählen</GroupLabel>
          </RibbonGroup>
        </Ribbon>

        <NavBar>
          <NavButton $w={38}>
            <svg width="14" height="12" viewBox="0 0 14 12">
              <path d="M13 6H2M6.500 1.500L2 6l4.500 4.500" fill="none" stroke="#555" strokeWidth="1.500" />
            </svg>
          </NavButton>
          <NavButton $w={22}>
            <svg width="14" height="12" viewBox="0 0 14 12">
              <path d="M1 6h11M7.500 1.500L12 6l-4.500 4.500" fill="none" stroke="#bdbdbd" strokeWidth="1.500" />
            </svg>
          </NavButton>
          <NavButton $w={23}>
            <svg width="7" height="5" viewBox="0 0 7 5">
              <path d="M.5 1l3 3 3-3" fill="none" stroke="#777" strokeWidth="1.200" />
            </svg>
          </NavButton>
          <NavButton $w={19}>
            <svg width="12" height="14" viewBox="0 0 12 14">
              <path d="M6 13V2M1.500 6.500L6 2l4.500 4.500" fill="none" stroke="#555" strokeWidth="1.500" />
            </svg>
          </NavButton>
          <AddressBox>
            <Icon n="docs" s={16} />
            <Crumb>›</Crumb>
            Dieser PC
            <Crumb>›</Crumb>
            Documents
            <AddressEnd>
              <svg width="9" height="6" viewBox="0 0 9 6">
                <path d="M1 1l3.500 3.500L8 1" fill="none" stroke="#555" strokeWidth="1.500" />
              </svg>
              <RefreshCell>
                <svg width="11" height="13" viewBox="0 0 11 13">
                  <path d="M3 3.600a4.200 4.200 0 1 0 5 0M3 .6v3h3" fill="none" stroke="#555" strokeWidth="1.300" />
                </svg>
              </RefreshCell>
            </AddressEnd>
          </AddressBox>
          <SearchBox>
            <svg width="13" height="14" viewBox="0 0 13 14">
              <circle cx="8" cy="5" r="4" fill="none" stroke="#888" />
              <Line x1={5} y1={8} x2={1} y2={13} c="#888" />
            </svg>
            Documents durchsuchen
          </SearchBox>
        </NavBar>

        <Body>
          <Sidebar>
            {navItems.map((item, i) => (
              <NavRow key={i} $lvl={item.lvl} $gap={item.gap} $sel={item.sel}>
                <Icon n={item.icon} />
                {item.label}
                {item.pin && (
                  <RowPin>
                    <Icon n="pin" s={12} />
                  </RowPin>
                )}
              </NavRow>
            ))}
          </Sidebar>

          <Main>
            <ListHeader>
              <HeadCell $pad={18}>
                Name
                <SortCaret width="9" height="5" viewBox="0 0 9 5">
                  <path d="M.5 4.500L4.500.5l4 4" fill="none" stroke="#888" />
                </SortCaret>
              </HeadCell>
              <HeadCell $pad={6}>Änderungsdatum</HeadCell>
              <HeadCell $pad={8}>Typ</HeadCell>
              <HeadCell $pad={7}>Größe</HeadCell>
            </ListHeader>
            <Rows>
              {files.map(([date, type, size, icon, link]) => (
                <FileRow key={date + type}>
                  <NameCell>
                    <Icon n={icon} s={16} />
                    {link && (
                      <ShortcutBadge>
                        <Icon n="badge" s={16} />
                      </ShortcutBadge>
                    )}
                  </NameCell>
                  <DateCell>{date}</DateCell>
                  <TypeCell>{type}</TypeCell>
                  <SizeCell>{size}</SizeCell>
                </FileRow>
              ))}
            </Rows>
          </Main>

          <ScrollTrack>
            <ScrollArrow>
              <svg width="9" height="6" viewBox="0 0 9 6">
                <path d="M1 5l3.500-3.500L8 5" fill="none" stroke="#505050" strokeWidth="1.600" />
              </svg>
            </ScrollArrow>
            <ScrollThumb />
            <ScrollRest />
            <ScrollArrow>
              <svg width="9" height="6" viewBox="0 0 9 6">
                <path d="M1 1l3.500 3.500L8 1" fill="none" stroke="#505050" strokeWidth="1.600" />
              </svg>
            </ScrollArrow>
          </ScrollTrack>
        </Body>

        <StatusBar>
          <StatusCount>41 Elemente</StatusCount>
          <ViewToggle>
            <ViewActive>
              <svg width="16" height="15" viewBox="0 0 16 15">
                <rect x=".5" y=".5" width="4" height="14" fill="#fff" stroke="#777" />
                <path d="M6 2.500h4M11.500 2.500h4M6 7.500h4M11.500 7.500h4M6 12.500h4M11.500 12.500h4M1.500 5h2M1.500 10h2" stroke="#666" />
              </svg>
            </ViewActive>
            <svg width="14" height="12" viewBox="0 0 14 12">
              <rect x=".5" y=".5" width="13" height="11" fill="#fff" stroke="#8f959b" />
              <rect x="2" y="2" width="10" height="3" fill="#bfe0f4" />
              <rect x="2" y="5" width="10" height="2" fill="#7b98a4" />
              <rect x="2" y="7" width="10" height="3" fill="#33505e" />
            </svg>
          </ViewToggle>
        </StatusBar>
      </ExplorerWindow>

      <Redaction $x={212} $y={231} $w={200} $h={819} />
      <Redaction $x={68} $y={337} $w={88} $h={44} />
      <Redaction $x={72} $y={775} $w={104} $h={48} />

      <Dialog>
        <DialogTitle>
          <Icon n="docs" s={14} />
          Eigenschaften von Documents
          <DialogClose>
            <svg width="12" height="12" viewBox="0 0 12 12">
              <Line x1={1} y1={1} x2={11} y2={11} c="#222" />
              <Line x1={11} y1={1} x2={1} y2={11} c="#222" />
            </svg>
          </DialogClose>
        </DialogTitle>
        <TabRow $first>
          <DialogTab $w={204}>Vorgängerversionen</DialogTab>
          <DialogTab $w={155}>Anpassen</DialogTab>
        </TabRow>
        <TabRow>
          <DialogTab $active $w={98}>
            Allgemein
          </DialogTab>
          <DialogTab $w={90}>Freigabe</DialogTab>
          <DialogTab $w={95}>Sicherheit</DialogTab>
          <DialogTab $w={78} $pr={4}>
            Pfad
          </DialogTab>
        </TabRow>
        <Panel>
          <IconRow>
            <Icon n="docs" s={30} />
            <NameInput>Documents</NameInput>
          </IconRow>
          <PropSep />
          <PropRow $mt={6}>
            <span>Typ:</span>
            <span>Systemordner</span>
          </PropRow>
          <PropRow>
            <span>Ort:</span>
            <PathValue>
              C:\Users\
              <PathGap />
              \Dropbox\Mein PC (DESKTOP-2CC
            </PathValue>
          </PropRow>
          <PropRow>
            <span>Größe:</span>
            <span>16,1 GB (17.324.994.758 Bytes)</span>
          </PropRow>
          <PropRow>
            <TwoLine>
              Größe auf
              <br />
              Datenträger:
            </TwoLine>
            <span>16,1 GB (17.376.055.296 Bytes)</span>
          </PropRow>
          <PropRow>
            <span>Inhalt:</span>
            <span>26.017 Dateien, 872 Ordner</span>
          </PropRow>
          <PropSep $mt={6} />
          <PropRow $mt={6}>
            <span>Erstellt:</span>
            <span>Mittwoch, 3. März 2021, 09:01:49</span>
          </PropRow>
          <PropSep $mt={6} />
          <PropRow $mt={6}>
            <span>Attribute:</span>
            <CheckRow>
              <CheckBox $mixed />
              Schreibgeschützt (betrifft nur Dateien im Ordner)
            </CheckRow>
          </PropRow>
          <PropRow $h={22}>
            <span />
            <CheckRow>
              <CheckBox />
              Versteckt
              <AdvancedButton $w={103}>Erweitert...</AdvancedButton>
            </CheckRow>
          </PropRow>
        </Panel>
        <DialogFooter>
          <DialogButton $default>OK</DialogButton>
          <DialogButton>Abbrechen</DialogButton>
          <DialogButton $off>Übernehmen</DialogButton>
        </DialogFooter>
        <Redaction $x={140} $y={165} $w={32} $h={21} $b={4} />
      </Dialog>
    </Desktop>
  );
};

export default App;
